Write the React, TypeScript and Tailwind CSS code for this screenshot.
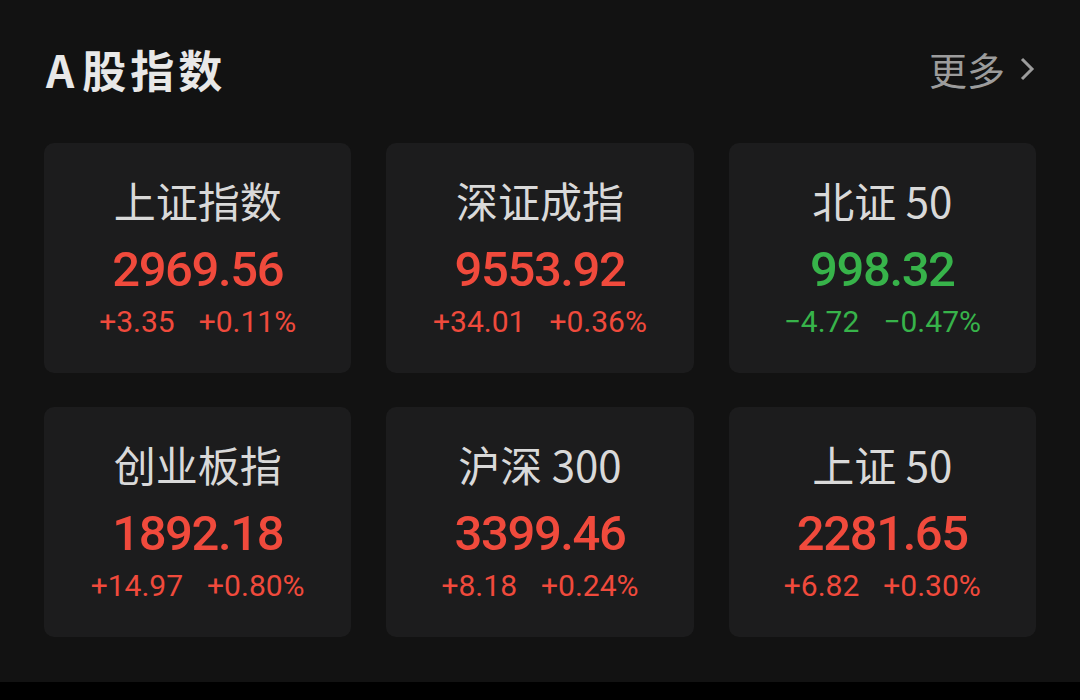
import React from "react";

type Index = {
  name: string;
  value: string;
  change: string;
  percent: string;
  up: boolean;
};

const INDEXES: Index[] = [
  { name: "上证指数", value: "2969.56", change: "+3.35", percent: "+0.11%", up: true },
  { name: "深证成指", value: "9553.92", change: "+34.01", percent: "+0.36%", up: true },
  { name: "北证 50", value: "998.32", change: "-4.72", percent: "-0.47%", up: false },
  { name: "创业板指", value: "1892.18", change: "+14.97", percent: "+0.80%", up: true },
  { name: "沪深 300", value: "3399.46", change: "+8.18", percent: "+0.24%", up: true },
  { name: "上证 50", value: "2281.65", change: "+6.82", percent: "+0.30%", up: true },
];

const cjk = "font-['Noto_Sans_CJK_SC',sans-serif]";
const num = "font-['Roboto','Noto_Sans_CJK_SC',sans-serif]";

function IndexCard({ item }: { item: Index }) {
  const color = item.up ? "text-[#f04a3c]" : "text-[#37b34a]";
  return (
    <div className="flex h-[230px] flex-col items-center rounded-[10px] bg-[#1c1c1d] pt-[36px]">
      <div className={`${cjk} text-[42px] leading-none font-normal text-[#d9d9d9]`}>{item.name}</div>
      <div className={`${num} ${color} mt-[24px] text-[49px] leading-none font-medium tracking-[-1.4px]`}>
        {item.value}
      </div>
      <div className={`${num} ${color} mt-[13px] flex gap-[24px] text-[30px] leading-none`}>
        <span>{item.change.replace("-", "−")}</span>
        <span>{item.percent.replace("-", "−")}</span>
      </div>
    </div>
  );
}

export default function App() {
  return (
    <div className="flex h-[700px] w-[1080px] flex-col bg-black">
      <div className="h-[682px] bg-[#121212] px-[44px]">
        {/* header */}
        <div className="flex h-[143px] items-start justify-between pt-[47px]">
          <h1 className={`${cjk} ml-[2px] flex text-[44px] leading-none font-bold tracking-[4px] text-[#e8e8e8]`}>
            <span className="mr-[4px]">A</span>股指数
          </h1>
          <div className={`${cjk} mt-[3px] flex items-center gap-[14px] text-[38px] leading-none text-[#9c9c9c]`}>
            <span>更多</span>
            <svg width="17" height="24" viewBox="0 0 17 24" fill="none" stroke="currentColor" strokeWidth={3}>
              <path d="M3 2 L13 12 L3 22" />
            </svg>
          </div>
        </div>
        {/* cards */}
        <div className="grid grid-cols-3 gap-x-[35px] gap-y-[34px]">
          {INDEXES.map((it) => (
            <IndexCard key={it.name} item={it} />
          ))}
        </div>
      </div>
    </div>
  );
}
